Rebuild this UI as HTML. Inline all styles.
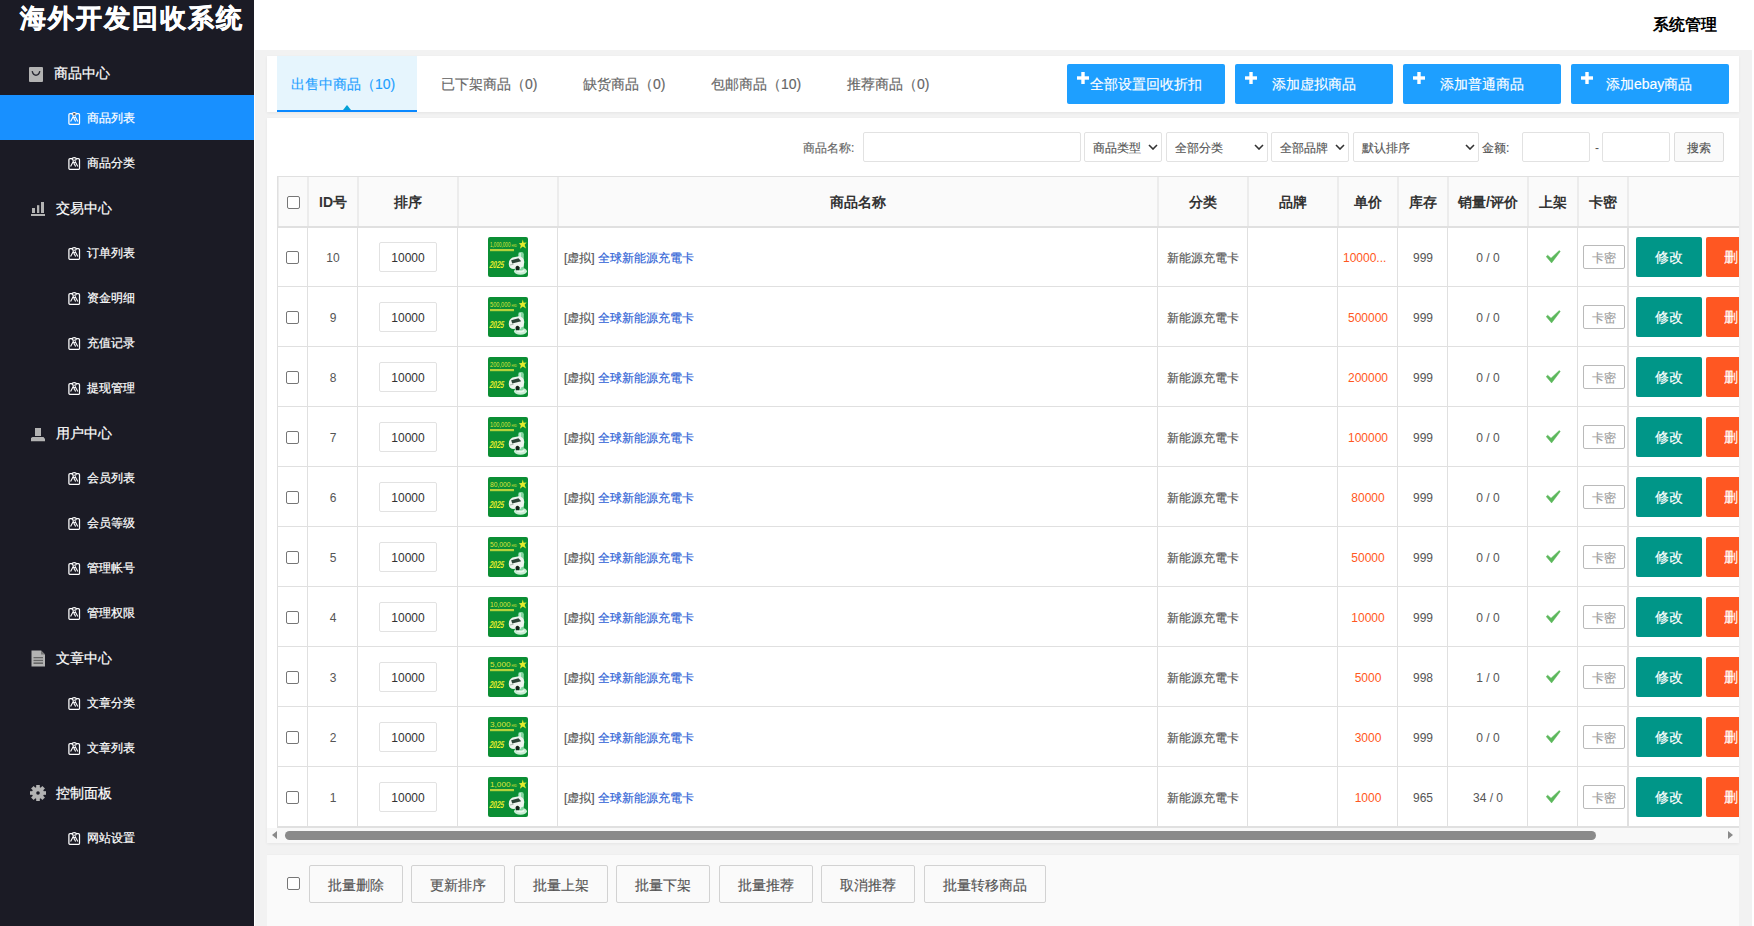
<!DOCTYPE html><html><head><meta charset="utf-8"><style>
*{margin:0;padding:0;box-sizing:border-box}
html,body{width:1754px;height:926px;overflow:hidden;background:#fff}
body{position:relative;font-family:"Liberation Sans", sans-serif;font-size:12px;color:#666}
.a{position:absolute}
.t{position:absolute;white-space:nowrap;line-height:1}
.k{-webkit-text-stroke:0.15px currentColor}
#side{left:0;top:0;width:254px;height:926px;background:#1b1b25}
.mt{color:#fff;font-size:14px;-webkit-text-stroke:0.2px #fff}
.st{color:#fff;font-size:12px;-webkit-text-stroke:0.2px #fff}
.panel{background:#fff;box-shadow:0 1px 3px rgba(0,0,0,.06)}
.btnb{background:#1e9fff;border-radius:2px;height:40px;width:158px}
.btnb .tx{color:#fff;font-size:14px}
.inp{border:1px solid #e2e2e2;border-radius:2px;background:#fff}
.sel{border:1px solid #e2e2e2;border-radius:2px;background:#fff}
.hl{background:#e0e0e0}
.hd{font-weight:bold;color:#333;font-size:14px;-webkit-text-stroke:0}
.cb{width:13px;height:13px;border:1px solid #767676;border-radius:2px;background:#fff}
.bb{border:1px solid #d2d2d2;border-radius:2px;height:38px;width:94px;background:#fafafa}
.bb .tx{color:#555;font-size:14px}
</style></head><body>
<div id="side" class="a"></div>
<div class="a" style="left:0;top:95px;width:254px;height:45px;background:#1890ff"></div>
<div class="t" style="left:20px;top:5px;font-size:26px;font-weight:bold;letter-spacing:2px;-webkit-text-stroke:0.5px #fff;color:#fff">海外开发回收系统</div>
<div class="t mt" style="left:54px;top:66.0px">商品中心</div>
<svg class="a" style="left:29px;top:66.5px" width="14" height="15" viewBox="0 0 14 15"><rect x="0" y="0" width="14" height="15" rx="1" fill="#b3b3b3"/><path d="M3.2 4.2 Q4 8.2 7 8.2 Q10 8.2 10.8 4.2" stroke="#2a2a33" stroke-width="1.4" fill="none"/></svg>
<svg class="a" style="left:67.5px;top:111.5px" width="13" height="13" viewBox="0 0 13 13"><rect x="0.9" y="1.6" width="10.6" height="10.8" rx="1.2" stroke="#fff" stroke-width="1.25" fill="none"/><ellipse cx="6.2" cy="1.9" rx="2.1" ry="1.3" stroke="#fff" stroke-width="1.1" fill="#1b1b25"/><path d="M2.6 9.6 L5.2 4.4 L7.6 9.6 M5.6 7.2 L7.3 4.8 L9.8 9.4" stroke="#fff" stroke-width="1.1" fill="none"/></svg>
<div class="t st" style="left:87px;top:111.5px">商品列表</div>
<svg class="a" style="left:67.5px;top:156.5px" width="13" height="13" viewBox="0 0 13 13"><rect x="0.9" y="1.6" width="10.6" height="10.8" rx="1.2" stroke="#fff" stroke-width="1.25" fill="none"/><ellipse cx="6.2" cy="1.9" rx="2.1" ry="1.3" stroke="#fff" stroke-width="1.1" fill="#1b1b25"/><path d="M2.6 9.6 L5.2 4.4 L7.6 9.6 M5.6 7.2 L7.3 4.8 L9.8 9.4" stroke="#fff" stroke-width="1.1" fill="none"/></svg>
<div class="t st" style="left:87px;top:156.5px">商品分类</div>
<div class="t mt" style="left:56px;top:201.0px">交易中心</div>
<svg class="a" style="left:31px;top:202.0px" width="14" height="15" viewBox="0 0 14 15"><rect x="1" y="6" width="3" height="5" fill="#b3b3b3"/><rect x="6" y="3.2" width="2.3" height="7.8" fill="#b3b3b3"/><rect x="10" y="0" width="3" height="11" fill="#b3b3b3"/><rect x="0" y="12" width="14" height="2" fill="#b3b3b3"/></svg>
<svg class="a" style="left:67.5px;top:246.5px" width="13" height="13" viewBox="0 0 13 13"><rect x="0.9" y="1.6" width="10.6" height="10.8" rx="1.2" stroke="#fff" stroke-width="1.25" fill="none"/><ellipse cx="6.2" cy="1.9" rx="2.1" ry="1.3" stroke="#fff" stroke-width="1.1" fill="#1b1b25"/><path d="M2.6 9.6 L5.2 4.4 L7.6 9.6 M5.6 7.2 L7.3 4.8 L9.8 9.4" stroke="#fff" stroke-width="1.1" fill="none"/></svg>
<div class="t st" style="left:87px;top:246.5px">订单列表</div>
<svg class="a" style="left:67.5px;top:291.5px" width="13" height="13" viewBox="0 0 13 13"><rect x="0.9" y="1.6" width="10.6" height="10.8" rx="1.2" stroke="#fff" stroke-width="1.25" fill="none"/><ellipse cx="6.2" cy="1.9" rx="2.1" ry="1.3" stroke="#fff" stroke-width="1.1" fill="#1b1b25"/><path d="M2.6 9.6 L5.2 4.4 L7.6 9.6 M5.6 7.2 L7.3 4.8 L9.8 9.4" stroke="#fff" stroke-width="1.1" fill="none"/></svg>
<div class="t st" style="left:87px;top:291.5px">资金明细</div>
<svg class="a" style="left:67.5px;top:336.5px" width="13" height="13" viewBox="0 0 13 13"><rect x="0.9" y="1.6" width="10.6" height="10.8" rx="1.2" stroke="#fff" stroke-width="1.25" fill="none"/><ellipse cx="6.2" cy="1.9" rx="2.1" ry="1.3" stroke="#fff" stroke-width="1.1" fill="#1b1b25"/><path d="M2.6 9.6 L5.2 4.4 L7.6 9.6 M5.6 7.2 L7.3 4.8 L9.8 9.4" stroke="#fff" stroke-width="1.1" fill="none"/></svg>
<div class="t st" style="left:87px;top:336.5px">充值记录</div>
<svg class="a" style="left:67.5px;top:381.5px" width="13" height="13" viewBox="0 0 13 13"><rect x="0.9" y="1.6" width="10.6" height="10.8" rx="1.2" stroke="#fff" stroke-width="1.25" fill="none"/><ellipse cx="6.2" cy="1.9" rx="2.1" ry="1.3" stroke="#fff" stroke-width="1.1" fill="#1b1b25"/><path d="M2.6 9.6 L5.2 4.4 L7.6 9.6 M5.6 7.2 L7.3 4.8 L9.8 9.4" stroke="#fff" stroke-width="1.1" fill="none"/></svg>
<div class="t st" style="left:87px;top:381.5px">提现管理</div>
<div class="t mt" style="left:56px;top:426.0px">用户中心</div>
<svg class="a" style="left:31px;top:428.0px" width="14" height="14" viewBox="0 0 14 14"><rect x="4" y="0" width="6" height="8" fill="#b3b3b3"/><path d="M0 10 L1.5 9 L12.5 9 L14 11 L14 13.3 L0 13.3 Z" fill="#b3b3b3"/></svg>
<svg class="a" style="left:67.5px;top:471.5px" width="13" height="13" viewBox="0 0 13 13"><rect x="0.9" y="1.6" width="10.6" height="10.8" rx="1.2" stroke="#fff" stroke-width="1.25" fill="none"/><ellipse cx="6.2" cy="1.9" rx="2.1" ry="1.3" stroke="#fff" stroke-width="1.1" fill="#1b1b25"/><path d="M2.6 9.6 L5.2 4.4 L7.6 9.6 M5.6 7.2 L7.3 4.8 L9.8 9.4" stroke="#fff" stroke-width="1.1" fill="none"/></svg>
<div class="t st" style="left:87px;top:471.5px">会员列表</div>
<svg class="a" style="left:67.5px;top:516.5px" width="13" height="13" viewBox="0 0 13 13"><rect x="0.9" y="1.6" width="10.6" height="10.8" rx="1.2" stroke="#fff" stroke-width="1.25" fill="none"/><ellipse cx="6.2" cy="1.9" rx="2.1" ry="1.3" stroke="#fff" stroke-width="1.1" fill="#1b1b25"/><path d="M2.6 9.6 L5.2 4.4 L7.6 9.6 M5.6 7.2 L7.3 4.8 L9.8 9.4" stroke="#fff" stroke-width="1.1" fill="none"/></svg>
<div class="t st" style="left:87px;top:516.5px">会员等级</div>
<svg class="a" style="left:67.5px;top:561.5px" width="13" height="13" viewBox="0 0 13 13"><rect x="0.9" y="1.6" width="10.6" height="10.8" rx="1.2" stroke="#fff" stroke-width="1.25" fill="none"/><ellipse cx="6.2" cy="1.9" rx="2.1" ry="1.3" stroke="#fff" stroke-width="1.1" fill="#1b1b25"/><path d="M2.6 9.6 L5.2 4.4 L7.6 9.6 M5.6 7.2 L7.3 4.8 L9.8 9.4" stroke="#fff" stroke-width="1.1" fill="none"/></svg>
<div class="t st" style="left:87px;top:561.5px">管理帐号</div>
<svg class="a" style="left:67.5px;top:606.5px" width="13" height="13" viewBox="0 0 13 13"><rect x="0.9" y="1.6" width="10.6" height="10.8" rx="1.2" stroke="#fff" stroke-width="1.25" fill="none"/><ellipse cx="6.2" cy="1.9" rx="2.1" ry="1.3" stroke="#fff" stroke-width="1.1" fill="#1b1b25"/><path d="M2.6 9.6 L5.2 4.4 L7.6 9.6 M5.6 7.2 L7.3 4.8 L9.8 9.4" stroke="#fff" stroke-width="1.1" fill="none"/></svg>
<div class="t st" style="left:87px;top:606.5px">管理权限</div>
<div class="t mt" style="left:56px;top:651.0px">文章中心</div>
<svg class="a" style="left:31px;top:649.5px" width="15" height="17" viewBox="0 0 15 17"><path d="M0.5 0.5 L10 0.5 L14 4.5 L14 16.5 L0.5 16.5 Z" fill="#b3b3b3"/><path d="M10 0.5 L10 4.5 L14 4.5" fill="#777"/><rect x="2.5" y="7" width="9.5" height="1.3" fill="#666"/><rect x="2.5" y="9.8" width="9.5" height="1.3" fill="#666"/><rect x="2.5" y="12.5" width="9.5" height="1.3" fill="#555"/></svg>
<svg class="a" style="left:67.5px;top:696.5px" width="13" height="13" viewBox="0 0 13 13"><rect x="0.9" y="1.6" width="10.6" height="10.8" rx="1.2" stroke="#fff" stroke-width="1.25" fill="none"/><ellipse cx="6.2" cy="1.9" rx="2.1" ry="1.3" stroke="#fff" stroke-width="1.1" fill="#1b1b25"/><path d="M2.6 9.6 L5.2 4.4 L7.6 9.6 M5.6 7.2 L7.3 4.8 L9.8 9.4" stroke="#fff" stroke-width="1.1" fill="none"/></svg>
<div class="t st" style="left:87px;top:696.5px">文章分类</div>
<svg class="a" style="left:67.5px;top:741.5px" width="13" height="13" viewBox="0 0 13 13"><rect x="0.9" y="1.6" width="10.6" height="10.8" rx="1.2" stroke="#fff" stroke-width="1.25" fill="none"/><ellipse cx="6.2" cy="1.9" rx="2.1" ry="1.3" stroke="#fff" stroke-width="1.1" fill="#1b1b25"/><path d="M2.6 9.6 L5.2 4.4 L7.6 9.6 M5.6 7.2 L7.3 4.8 L9.8 9.4" stroke="#fff" stroke-width="1.1" fill="none"/></svg>
<div class="t st" style="left:87px;top:741.5px">文章列表</div>
<div class="t mt" style="left:56px;top:786.0px">控制面板</div>
<svg class="a" style="left:30px;top:784.5px" width="16" height="16" viewBox="0 0 16 16"><g fill="#b3b3b3"><circle cx="8" cy="8" r="6"/><rect x="6.2" y="0" width="3.6" height="16"/><rect x="0" y="6.2" width="16" height="3.6"/><rect x="6.2" y="0" width="3.6" height="16" transform="rotate(45 8 8)"/><rect x="6.2" y="0" width="3.6" height="16" transform="rotate(-45 8 8)"/></g><circle cx="8" cy="8" r="1.8" fill="#1b1b25"/></svg>
<svg class="a" style="left:67.5px;top:831.5px" width="13" height="13" viewBox="0 0 13 13"><rect x="0.9" y="1.6" width="10.6" height="10.8" rx="1.2" stroke="#fff" stroke-width="1.25" fill="none"/><ellipse cx="6.2" cy="1.9" rx="2.1" ry="1.3" stroke="#fff" stroke-width="1.1" fill="#1b1b25"/><path d="M2.6 9.6 L5.2 4.4 L7.6 9.6 M5.6 7.2 L7.3 4.8 L9.8 9.4" stroke="#fff" stroke-width="1.1" fill="none"/></svg>
<div class="t st" style="left:87px;top:831.5px">网站设置</div>
<div class="a" style="left:255px;top:50px;width:1497px;height:876px;background:#f2f2f2"></div>
<div class="t" style="left:1653px;top:17px;font-size:16px;font-weight:bold;color:#000;-webkit-text-stroke:0">系统管理</div>
<div class="a panel" style="left:267px;top:56px;width:1472px;height:56px"></div>
<div class="a" style="left:277px;top:56px;width:140px;height:54px;background:#e6f5fd"></div>
<div class="a" style="left:277px;top:110px;width:140px;height:2px;background:#0a88ff"></div>
<div class="a" style="left:343px;top:105px;width:0;height:0;border-left:4.5px solid transparent;border-right:4.5px solid transparent;border-bottom:5px solid #03a0d6"></div>
<div class="t k" style="left:291px;top:77px;font-size:14px;color:#1e9fff">出售中商品（10)</div>
<div class="t k" style="left:441px;top:77px;font-size:14px;color:#666">已下架商品（0)</div>
<div class="t k" style="left:583px;top:77px;font-size:14px;color:#666">缺货商品（0)</div>
<div class="t k" style="left:711px;top:77px;font-size:14px;color:#666">包邮商品（10)</div>
<div class="t k" style="left:847px;top:77px;font-size:14px;color:#666">推荐商品（0)</div>
<div class="a btnb" style="left:1067px;top:64px"></div>
<svg class="a" style="left:1077px;top:72px" width="12" height="12" viewBox="0 0 12 12"><rect x="4.3" y="0" width="3.4" height="12" fill="#fff"/><rect x="0" y="4.3" width="12" height="3.4" fill="#fff"/></svg>
<div class="t k" style="left:1090px;top:77px;font-size:14px;color:#fff">全部设置回收折扣</div>
<div class="a btnb" style="left:1235px;top:64px"></div>
<svg class="a" style="left:1245px;top:72px" width="12" height="12" viewBox="0 0 12 12"><rect x="4.3" y="0" width="3.4" height="12" fill="#fff"/><rect x="0" y="4.3" width="12" height="3.4" fill="#fff"/></svg>
<div class="t k" style="left:1272px;top:77px;font-size:14px;color:#fff">添加虚拟商品</div>
<div class="a btnb" style="left:1403px;top:64px"></div>
<svg class="a" style="left:1413px;top:72px" width="12" height="12" viewBox="0 0 12 12"><rect x="4.3" y="0" width="3.4" height="12" fill="#fff"/><rect x="0" y="4.3" width="12" height="3.4" fill="#fff"/></svg>
<div class="t k" style="left:1440px;top:77px;font-size:14px;color:#fff">添加普通商品</div>
<div class="a btnb" style="left:1571px;top:64px"></div>
<svg class="a" style="left:1581px;top:72px" width="12" height="12" viewBox="0 0 12 12"><rect x="4.3" y="0" width="3.4" height="12" fill="#fff"/><rect x="0" y="4.3" width="12" height="3.4" fill="#fff"/></svg>
<div class="t k" style="left:1606px;top:77px;font-size:14px;color:#fff">添加ebay商品</div>
<div class="a panel" style="left:267px;top:118px;width:1472px;height:725px"></div>
<div class="t k" style="left:803px;top:142px;font-size:12px;color:#666">商品名称:</div>
<div class="a inp" style="left:863px;top:132px;width:218px;height:30px"></div>
<div class="a sel" style="left:1084px;top:132px;width:78px;height:30px"></div>
<div class="t k" style="left:1093px;top:142px;font-size:12px;color:#555">商品类型</div>
<svg class="a" style="left:1148px;top:144px" width="10" height="6" viewBox="0 0 10 6"><path d="M1 1 L5 5 L9 1" stroke="#333" stroke-width="1.6" fill="none"/></svg>
<div class="a sel" style="left:1166px;top:132px;width:102px;height:30px"></div>
<div class="t k" style="left:1175px;top:142px;font-size:12px;color:#555">全部分类</div>
<svg class="a" style="left:1254px;top:144px" width="10" height="6" viewBox="0 0 10 6"><path d="M1 1 L5 5 L9 1" stroke="#333" stroke-width="1.6" fill="none"/></svg>
<div class="a sel" style="left:1271px;top:132px;width:78px;height:30px"></div>
<div class="t k" style="left:1280px;top:142px;font-size:12px;color:#555">全部品牌</div>
<svg class="a" style="left:1335px;top:144px" width="10" height="6" viewBox="0 0 10 6"><path d="M1 1 L5 5 L9 1" stroke="#333" stroke-width="1.6" fill="none"/></svg>
<div class="a sel" style="left:1353px;top:132px;width:126px;height:30px"></div>
<div class="t k" style="left:1362px;top:142px;font-size:12px;color:#555">默认排序</div>
<svg class="a" style="left:1465px;top:144px" width="10" height="6" viewBox="0 0 10 6"><path d="M1 1 L5 5 L9 1" stroke="#333" stroke-width="1.6" fill="none"/></svg>
<div class="t k" style="left:1482px;top:142px;font-size:12px;color:#555">金额:</div>
<div class="a inp" style="left:1522px;top:132px;width:68px;height:30px"></div>
<div class="t" style="left:1595px;top:142px;font-size:12px;color:#555">-</div>
<div class="a inp" style="left:1602px;top:132px;width:68px;height:30px"></div>
<div class="a" style="left:1674px;top:132px;width:50px;height:30px;border:1px solid #ddd;border-radius:2px;background:#fafafa"></div>
<div class="t k" style="left:1687px;top:142px;font-size:12px;color:#555">搜索</div>
<div class="a" style="left:277px;top:176px;width:1462px;height:51px;background:#fafafa"></div>
<div class="a hl" style="left:277px;top:176px;width:1462px;height:1px"></div>
<div class="a hl" style="left:277px;top:226px;width:1462px;height:1px"></div>
<div class="a hl" style="left:277px;top:227px;width:1462px;height:1px"></div>
<div class="a hl" style="left:277px;top:286px;width:1462px;height:1px"></div>
<div class="a hl" style="left:277px;top:346px;width:1462px;height:1px"></div>
<div class="a hl" style="left:277px;top:406px;width:1462px;height:1px"></div>
<div class="a hl" style="left:277px;top:466px;width:1462px;height:1px"></div>
<div class="a hl" style="left:277px;top:526px;width:1462px;height:1px"></div>
<div class="a hl" style="left:277px;top:586px;width:1462px;height:1px"></div>
<div class="a hl" style="left:277px;top:646px;width:1462px;height:1px"></div>
<div class="a hl" style="left:277px;top:706px;width:1462px;height:1px"></div>
<div class="a hl" style="left:277px;top:766px;width:1462px;height:1px"></div>
<div class="a hl" style="left:277px;top:826px;width:1462px;height:1px"></div>
<div class="a hl" style="left:277px;top:827px;width:1462px;height:1px"></div>
<div class="a hl" style="left:277px;top:226px;width:1px;height:602px"></div>
<div class="a" style="left:277px;top:176px;width:2px;height:50px;background:#ececec"></div>
<div class="a hl" style="left:307px;top:226px;width:1px;height:602px"></div>
<div class="a" style="left:307px;top:176px;width:2px;height:50px;background:#ececec"></div>
<div class="a hl" style="left:357px;top:226px;width:1px;height:602px"></div>
<div class="a" style="left:357px;top:176px;width:2px;height:50px;background:#ececec"></div>
<div class="a hl" style="left:457px;top:226px;width:1px;height:602px"></div>
<div class="a" style="left:457px;top:176px;width:2px;height:50px;background:#ececec"></div>
<div class="a hl" style="left:557px;top:226px;width:1px;height:602px"></div>
<div class="a" style="left:557px;top:176px;width:2px;height:50px;background:#ececec"></div>
<div class="a hl" style="left:1157px;top:226px;width:1px;height:602px"></div>
<div class="a" style="left:1157px;top:176px;width:2px;height:50px;background:#ececec"></div>
<div class="a hl" style="left:1247px;top:226px;width:1px;height:602px"></div>
<div class="a" style="left:1247px;top:176px;width:2px;height:50px;background:#ececec"></div>
<div class="a hl" style="left:1337px;top:226px;width:1px;height:602px"></div>
<div class="a" style="left:1337px;top:176px;width:2px;height:50px;background:#ececec"></div>
<div class="a hl" style="left:1397px;top:226px;width:1px;height:602px"></div>
<div class="a" style="left:1397px;top:176px;width:2px;height:50px;background:#ececec"></div>
<div class="a hl" style="left:1447px;top:226px;width:1px;height:602px"></div>
<div class="a" style="left:1447px;top:176px;width:2px;height:50px;background:#ececec"></div>
<div class="a hl" style="left:1527px;top:226px;width:1px;height:602px"></div>
<div class="a" style="left:1527px;top:176px;width:2px;height:50px;background:#ececec"></div>
<div class="a hl" style="left:1577px;top:226px;width:1px;height:602px"></div>
<div class="a" style="left:1577px;top:176px;width:2px;height:50px;background:#ececec"></div>
<div class="a hl" style="left:1627px;top:226px;width:1px;height:602px"></div>
<div class="a" style="left:1627px;top:176px;width:2px;height:50px;background:#ececec"></div>
<div class="a hl" style="left:1628px;top:226px;width:1px;height:602px"></div>
<div class="a hl" style="left:277px;top:176px;width:1px;height:652px"></div>
<div class="a hl" style="left:277px;top:176px;width:1462px;height:1px"></div>
<div class="a cb" style="left:287px;top:196px"></div>
<div class="t hd" style="left:333px;top:195px;transform:translateX(-50%)">ID号</div>
<div class="t hd" style="left:408px;top:195px;transform:translateX(-50%)">排序</div>
<div class="t hd" style="left:858px;top:195px;transform:translateX(-50%)">商品名称</div>
<div class="t hd" style="left:1203px;top:195px;transform:translateX(-50%)">分类</div>
<div class="t hd" style="left:1293px;top:195px;transform:translateX(-50%)">品牌</div>
<div class="t hd" style="left:1368px;top:195px;transform:translateX(-50%)">单价</div>
<div class="t hd" style="left:1423px;top:195px;transform:translateX(-50%)">库存</div>
<div class="t hd" style="left:1488px;top:195px;transform:translateX(-50%)">销量/评价</div>
<div class="t hd" style="left:1553px;top:195px;transform:translateX(-50%)">上架</div>
<div class="t hd" style="left:1603px;top:195px;transform:translateX(-50%)">卡密</div>
<div class="a cb" style="left:286px;top:251px"></div>
<div class="t" style="left:333px;top:252px;font-size:12px;color:#555;transform:translateX(-50%)">10</div>
<div class="a inp" style="left:379px;top:242px;width:58px;height:30px"></div>
<div class="t" style="left:408px;top:252px;font-size:12px;color:#333;transform:translateX(-50%)">10000</div>
<svg class="a" style="left:488px;top:237px" width="40" height="40" viewBox="0 0 40 40"><rect width="40" height="40" rx="2" fill="#0b8e34"/><text x="2" y="10.3" font-size="7.6" font-family="Liberation Sans" fill="#dfe63a" textLength="20.5" lengthAdjust="spacingAndGlyphs">1,000,000</text><text x="23.5" y="9.6" font-size="3.6" font-family="Liberation Sans" fill="#dfe63a" textLength="5.5" lengthAdjust="spacingAndGlyphs">HKD</text><rect x="2" y="12" width="24" height="2.2" fill="#c6d93c" opacity=".9"/><text x="2" y="30.8" font-size="10" font-weight="bold" font-family="Liberation Sans" fill="#e9ee2c" textLength="14.5" lengthAdjust="spacingAndGlyphs" transform="skewX(-12) translate(5.5 0)">2025</text><path d="M34.8 2.5 L35.6 5.8 L38.6 5.4 L36.6 7.8 L38 11.4 L34.8 9.6 L32 11.8 L32.8 8.2 L30.8 6.2 L33.8 6 Z" fill="#e6ec2c"/><ellipse cx="32.5" cy="34.3" rx="6.5" ry="3.5" fill="#c9ecd3"/><ellipse cx="32.5" cy="33.8" rx="3.8" ry="1.7" fill="#eaf8ee"/><rect x="30.2" y="15" width="5.6" height="18.5" rx="2.2" fill="#86d7a2"/><rect x="31.2" y="16" width="1.8" height="16" fill="#c8f0d4"/><path d="M20.8 27.5 Q20.5 22.5 24.5 20.6 L31 19.2 Q35.8 20 36.3 25 L35.5 29.5 Q30.5 32 25 32 Q21 31.2 20.8 27.5 Z" fill="#eef4ef"/><path d="M23.2 23.2 L30.5 21.2 L33.2 24.2 L24.2 26.4 Z" fill="#2b4436"/><path d="M27.5 30.2 Q29.6 27.4 31.8 30.4 L31.2 33.2 L28 33.2 Z" fill="#13241a"/><path d="M21.8 28 L25.5 27.3" stroke="#9aa8a0" stroke-width=".8"/></svg>
<div class="t k" style="left:564px;top:252px;font-size:12px;color:#555">[虚拟] <span style="color:#2d5fd6">全球新能源充電卡</span></div>
<div class="t k" style="left:1203px;top:252px;font-size:12px;color:#555;transform:translateX(-50%)">新能源充電卡</div>
<div class="t" style="left:1343px;top:252px;font-size:12px;color:#ff5722">10000...</div>
<div class="t" style="left:1423px;top:252px;font-size:12px;color:#555;transform:translateX(-50%)">999</div>
<div class="t" style="left:1488px;top:252px;font-size:12px;color:#555;transform:translateX(-50%)">0 / 0</div>
<svg class="a" style="left:1546px;top:250px" width="15" height="14" viewBox="0 0 15 14"><path d="M0.2 6.6 L1.7 5.2 L5.0 8.2 L13.3 0.5 L14.2 1.6 L5.6 12.9 Z" fill="#5cb85c" stroke="#5cb85c" stroke-width="0.5" stroke-linejoin="round"/></svg>
<div class="a" style="left:1583px;top:245px;width:42px;height:24px;border:1px solid #bababa;border-radius:2px;background:#fff"></div>
<div class="t k" style="left:1592px;top:252px;font-size:12px;color:#999">卡密</div>
<div class="a" style="left:1636px;top:237px;width:66px;height:40px;background:#009688;border-radius:2px"></div>
<div class="t k" style="left:1655px;top:250px;font-size:14px;color:#fff">修改</div>
<div class="a" style="left:1706px;top:237px;width:33px;height:40px;background:#ff5722;border-radius:2px 0 0 2px"></div>
<div class="t k" style="left:1724px;top:250px;width:15px;overflow:hidden;font-size:14px;color:#fff">删</div>
<div class="a cb" style="left:286px;top:311px"></div>
<div class="t" style="left:333px;top:312px;font-size:12px;color:#555;transform:translateX(-50%)">9</div>
<div class="a inp" style="left:379px;top:302px;width:58px;height:30px"></div>
<div class="t" style="left:408px;top:312px;font-size:12px;color:#333;transform:translateX(-50%)">10000</div>
<svg class="a" style="left:488px;top:297px" width="40" height="40" viewBox="0 0 40 40"><rect width="40" height="40" rx="2" fill="#0b8e34"/><text x="2" y="10.3" font-size="7.6" font-family="Liberation Sans" fill="#dfe63a" textLength="20.5" lengthAdjust="spacingAndGlyphs">500,000</text><text x="23.5" y="9.6" font-size="3.6" font-family="Liberation Sans" fill="#dfe63a" textLength="5.5" lengthAdjust="spacingAndGlyphs">HKD</text><rect x="2" y="12" width="24" height="2.2" fill="#c6d93c" opacity=".9"/><text x="2" y="30.8" font-size="10" font-weight="bold" font-family="Liberation Sans" fill="#e9ee2c" textLength="14.5" lengthAdjust="spacingAndGlyphs" transform="skewX(-12) translate(5.5 0)">2025</text><path d="M34.8 2.5 L35.6 5.8 L38.6 5.4 L36.6 7.8 L38 11.4 L34.8 9.6 L32 11.8 L32.8 8.2 L30.8 6.2 L33.8 6 Z" fill="#e6ec2c"/><ellipse cx="32.5" cy="34.3" rx="6.5" ry="3.5" fill="#c9ecd3"/><ellipse cx="32.5" cy="33.8" rx="3.8" ry="1.7" fill="#eaf8ee"/><rect x="30.2" y="15" width="5.6" height="18.5" rx="2.2" fill="#86d7a2"/><rect x="31.2" y="16" width="1.8" height="16" fill="#c8f0d4"/><path d="M20.8 27.5 Q20.5 22.5 24.5 20.6 L31 19.2 Q35.8 20 36.3 25 L35.5 29.5 Q30.5 32 25 32 Q21 31.2 20.8 27.5 Z" fill="#eef4ef"/><path d="M23.2 23.2 L30.5 21.2 L33.2 24.2 L24.2 26.4 Z" fill="#2b4436"/><path d="M27.5 30.2 Q29.6 27.4 31.8 30.4 L31.2 33.2 L28 33.2 Z" fill="#13241a"/><path d="M21.8 28 L25.5 27.3" stroke="#9aa8a0" stroke-width=".8"/></svg>
<div class="t k" style="left:564px;top:312px;font-size:12px;color:#555">[虚拟] <span style="color:#2d5fd6">全球新能源充電卡</span></div>
<div class="t k" style="left:1203px;top:312px;font-size:12px;color:#555;transform:translateX(-50%)">新能源充電卡</div>
<div class="t" style="left:1368px;top:312px;font-size:12px;color:#ff5722;transform:translateX(-50%)">500000</div>
<div class="t" style="left:1423px;top:312px;font-size:12px;color:#555;transform:translateX(-50%)">999</div>
<div class="t" style="left:1488px;top:312px;font-size:12px;color:#555;transform:translateX(-50%)">0 / 0</div>
<svg class="a" style="left:1546px;top:310px" width="15" height="14" viewBox="0 0 15 14"><path d="M0.2 6.6 L1.7 5.2 L5.0 8.2 L13.3 0.5 L14.2 1.6 L5.6 12.9 Z" fill="#5cb85c" stroke="#5cb85c" stroke-width="0.5" stroke-linejoin="round"/></svg>
<div class="a" style="left:1583px;top:305px;width:42px;height:24px;border:1px solid #bababa;border-radius:2px;background:#fff"></div>
<div class="t k" style="left:1592px;top:312px;font-size:12px;color:#999">卡密</div>
<div class="a" style="left:1636px;top:297px;width:66px;height:40px;background:#009688;border-radius:2px"></div>
<div class="t k" style="left:1655px;top:310px;font-size:14px;color:#fff">修改</div>
<div class="a" style="left:1706px;top:297px;width:33px;height:40px;background:#ff5722;border-radius:2px 0 0 2px"></div>
<div class="t k" style="left:1724px;top:310px;width:15px;overflow:hidden;font-size:14px;color:#fff">删</div>
<div class="a cb" style="left:286px;top:371px"></div>
<div class="t" style="left:333px;top:372px;font-size:12px;color:#555;transform:translateX(-50%)">8</div>
<div class="a inp" style="left:379px;top:362px;width:58px;height:30px"></div>
<div class="t" style="left:408px;top:372px;font-size:12px;color:#333;transform:translateX(-50%)">10000</div>
<svg class="a" style="left:488px;top:357px" width="40" height="40" viewBox="0 0 40 40"><rect width="40" height="40" rx="2" fill="#0b8e34"/><text x="2" y="10.3" font-size="7.6" font-family="Liberation Sans" fill="#dfe63a" textLength="20.5" lengthAdjust="spacingAndGlyphs">200,000</text><text x="23.5" y="9.6" font-size="3.6" font-family="Liberation Sans" fill="#dfe63a" textLength="5.5" lengthAdjust="spacingAndGlyphs">HKD</text><rect x="2" y="12" width="24" height="2.2" fill="#c6d93c" opacity=".9"/><text x="2" y="30.8" font-size="10" font-weight="bold" font-family="Liberation Sans" fill="#e9ee2c" textLength="14.5" lengthAdjust="spacingAndGlyphs" transform="skewX(-12) translate(5.5 0)">2025</text><path d="M34.8 2.5 L35.6 5.8 L38.6 5.4 L36.6 7.8 L38 11.4 L34.8 9.6 L32 11.8 L32.8 8.2 L30.8 6.2 L33.8 6 Z" fill="#e6ec2c"/><ellipse cx="32.5" cy="34.3" rx="6.5" ry="3.5" fill="#c9ecd3"/><ellipse cx="32.5" cy="33.8" rx="3.8" ry="1.7" fill="#eaf8ee"/><rect x="30.2" y="15" width="5.6" height="18.5" rx="2.2" fill="#86d7a2"/><rect x="31.2" y="16" width="1.8" height="16" fill="#c8f0d4"/><path d="M20.8 27.5 Q20.5 22.5 24.5 20.6 L31 19.2 Q35.8 20 36.3 25 L35.5 29.5 Q30.5 32 25 32 Q21 31.2 20.8 27.5 Z" fill="#eef4ef"/><path d="M23.2 23.2 L30.5 21.2 L33.2 24.2 L24.2 26.4 Z" fill="#2b4436"/><path d="M27.5 30.2 Q29.6 27.4 31.8 30.4 L31.2 33.2 L28 33.2 Z" fill="#13241a"/><path d="M21.8 28 L25.5 27.3" stroke="#9aa8a0" stroke-width=".8"/></svg>
<div class="t k" style="left:564px;top:372px;font-size:12px;color:#555">[虚拟] <span style="color:#2d5fd6">全球新能源充電卡</span></div>
<div class="t k" style="left:1203px;top:372px;font-size:12px;color:#555;transform:translateX(-50%)">新能源充電卡</div>
<div class="t" style="left:1368px;top:372px;font-size:12px;color:#ff5722;transform:translateX(-50%)">200000</div>
<div class="t" style="left:1423px;top:372px;font-size:12px;color:#555;transform:translateX(-50%)">999</div>
<div class="t" style="left:1488px;top:372px;font-size:12px;color:#555;transform:translateX(-50%)">0 / 0</div>
<svg class="a" style="left:1546px;top:370px" width="15" height="14" viewBox="0 0 15 14"><path d="M0.2 6.6 L1.7 5.2 L5.0 8.2 L13.3 0.5 L14.2 1.6 L5.6 12.9 Z" fill="#5cb85c" stroke="#5cb85c" stroke-width="0.5" stroke-linejoin="round"/></svg>
<div class="a" style="left:1583px;top:365px;width:42px;height:24px;border:1px solid #bababa;border-radius:2px;background:#fff"></div>
<div class="t k" style="left:1592px;top:372px;font-size:12px;color:#999">卡密</div>
<div class="a" style="left:1636px;top:357px;width:66px;height:40px;background:#009688;border-radius:2px"></div>
<div class="t k" style="left:1655px;top:370px;font-size:14px;color:#fff">修改</div>
<div class="a" style="left:1706px;top:357px;width:33px;height:40px;background:#ff5722;border-radius:2px 0 0 2px"></div>
<div class="t k" style="left:1724px;top:370px;width:15px;overflow:hidden;font-size:14px;color:#fff">删</div>
<div class="a cb" style="left:286px;top:431px"></div>
<div class="t" style="left:333px;top:432px;font-size:12px;color:#555;transform:translateX(-50%)">7</div>
<div class="a inp" style="left:379px;top:422px;width:58px;height:30px"></div>
<div class="t" style="left:408px;top:432px;font-size:12px;color:#333;transform:translateX(-50%)">10000</div>
<svg class="a" style="left:488px;top:417px" width="40" height="40" viewBox="0 0 40 40"><rect width="40" height="40" rx="2" fill="#0b8e34"/><text x="2" y="10.3" font-size="7.6" font-family="Liberation Sans" fill="#dfe63a" textLength="20.5" lengthAdjust="spacingAndGlyphs">100,000</text><text x="23.5" y="9.6" font-size="3.6" font-family="Liberation Sans" fill="#dfe63a" textLength="5.5" lengthAdjust="spacingAndGlyphs">HKD</text><rect x="2" y="12" width="24" height="2.2" fill="#c6d93c" opacity=".9"/><text x="2" y="30.8" font-size="10" font-weight="bold" font-family="Liberation Sans" fill="#e9ee2c" textLength="14.5" lengthAdjust="spacingAndGlyphs" transform="skewX(-12) translate(5.5 0)">2025</text><path d="M34.8 2.5 L35.6 5.8 L38.6 5.4 L36.6 7.8 L38 11.4 L34.8 9.6 L32 11.8 L32.8 8.2 L30.8 6.2 L33.8 6 Z" fill="#e6ec2c"/><ellipse cx="32.5" cy="34.3" rx="6.5" ry="3.5" fill="#c9ecd3"/><ellipse cx="32.5" cy="33.8" rx="3.8" ry="1.7" fill="#eaf8ee"/><rect x="30.2" y="15" width="5.6" height="18.5" rx="2.2" fill="#86d7a2"/><rect x="31.2" y="16" width="1.8" height="16" fill="#c8f0d4"/><path d="M20.8 27.5 Q20.5 22.5 24.5 20.6 L31 19.2 Q35.8 20 36.3 25 L35.5 29.5 Q30.5 32 25 32 Q21 31.2 20.8 27.5 Z" fill="#eef4ef"/><path d="M23.2 23.2 L30.5 21.2 L33.2 24.2 L24.2 26.4 Z" fill="#2b4436"/><path d="M27.5 30.2 Q29.6 27.4 31.8 30.4 L31.2 33.2 L28 33.2 Z" fill="#13241a"/><path d="M21.8 28 L25.5 27.3" stroke="#9aa8a0" stroke-width=".8"/></svg>
<div class="t k" style="left:564px;top:432px;font-size:12px;color:#555">[虚拟] <span style="color:#2d5fd6">全球新能源充電卡</span></div>
<div class="t k" style="left:1203px;top:432px;font-size:12px;color:#555;transform:translateX(-50%)">新能源充電卡</div>
<div class="t" style="left:1368px;top:432px;font-size:12px;color:#ff5722;transform:translateX(-50%)">100000</div>
<div class="t" style="left:1423px;top:432px;font-size:12px;color:#555;transform:translateX(-50%)">999</div>
<div class="t" style="left:1488px;top:432px;font-size:12px;color:#555;transform:translateX(-50%)">0 / 0</div>
<svg class="a" style="left:1546px;top:430px" width="15" height="14" viewBox="0 0 15 14"><path d="M0.2 6.6 L1.7 5.2 L5.0 8.2 L13.3 0.5 L14.2 1.6 L5.6 12.9 Z" fill="#5cb85c" stroke="#5cb85c" stroke-width="0.5" stroke-linejoin="round"/></svg>
<div class="a" style="left:1583px;top:425px;width:42px;height:24px;border:1px solid #bababa;border-radius:2px;background:#fff"></div>
<div class="t k" style="left:1592px;top:432px;font-size:12px;color:#999">卡密</div>
<div class="a" style="left:1636px;top:417px;width:66px;height:40px;background:#009688;border-radius:2px"></div>
<div class="t k" style="left:1655px;top:430px;font-size:14px;color:#fff">修改</div>
<div class="a" style="left:1706px;top:417px;width:33px;height:40px;background:#ff5722;border-radius:2px 0 0 2px"></div>
<div class="t k" style="left:1724px;top:430px;width:15px;overflow:hidden;font-size:14px;color:#fff">删</div>
<div class="a cb" style="left:286px;top:491px"></div>
<div class="t" style="left:333px;top:492px;font-size:12px;color:#555;transform:translateX(-50%)">6</div>
<div class="a inp" style="left:379px;top:482px;width:58px;height:30px"></div>
<div class="t" style="left:408px;top:492px;font-size:12px;color:#333;transform:translateX(-50%)">10000</div>
<svg class="a" style="left:488px;top:477px" width="40" height="40" viewBox="0 0 40 40"><rect width="40" height="40" rx="2" fill="#0b8e34"/><text x="2" y="10.3" font-size="7.6" font-family="Liberation Sans" fill="#dfe63a" textLength="20.5" lengthAdjust="spacingAndGlyphs">80,000</text><text x="23.5" y="9.6" font-size="3.6" font-family="Liberation Sans" fill="#dfe63a" textLength="5.5" lengthAdjust="spacingAndGlyphs">HKD</text><rect x="2" y="12" width="24" height="2.2" fill="#c6d93c" opacity=".9"/><text x="2" y="30.8" font-size="10" font-weight="bold" font-family="Liberation Sans" fill="#e9ee2c" textLength="14.5" lengthAdjust="spacingAndGlyphs" transform="skewX(-12) translate(5.5 0)">2025</text><path d="M34.8 2.5 L35.6 5.8 L38.6 5.4 L36.6 7.8 L38 11.4 L34.8 9.6 L32 11.8 L32.8 8.2 L30.8 6.2 L33.8 6 Z" fill="#e6ec2c"/><ellipse cx="32.5" cy="34.3" rx="6.5" ry="3.5" fill="#c9ecd3"/><ellipse cx="32.5" cy="33.8" rx="3.8" ry="1.7" fill="#eaf8ee"/><rect x="30.2" y="15" width="5.6" height="18.5" rx="2.2" fill="#86d7a2"/><rect x="31.2" y="16" width="1.8" height="16" fill="#c8f0d4"/><path d="M20.8 27.5 Q20.5 22.5 24.5 20.6 L31 19.2 Q35.8 20 36.3 25 L35.5 29.5 Q30.5 32 25 32 Q21 31.2 20.8 27.5 Z" fill="#eef4ef"/><path d="M23.2 23.2 L30.5 21.2 L33.2 24.2 L24.2 26.4 Z" fill="#2b4436"/><path d="M27.5 30.2 Q29.6 27.4 31.8 30.4 L31.2 33.2 L28 33.2 Z" fill="#13241a"/><path d="M21.8 28 L25.5 27.3" stroke="#9aa8a0" stroke-width=".8"/></svg>
<div class="t k" style="left:564px;top:492px;font-size:12px;color:#555">[虚拟] <span style="color:#2d5fd6">全球新能源充電卡</span></div>
<div class="t k" style="left:1203px;top:492px;font-size:12px;color:#555;transform:translateX(-50%)">新能源充電卡</div>
<div class="t" style="left:1368px;top:492px;font-size:12px;color:#ff5722;transform:translateX(-50%)">80000</div>
<div class="t" style="left:1423px;top:492px;font-size:12px;color:#555;transform:translateX(-50%)">999</div>
<div class="t" style="left:1488px;top:492px;font-size:12px;color:#555;transform:translateX(-50%)">0 / 0</div>
<svg class="a" style="left:1546px;top:490px" width="15" height="14" viewBox="0 0 15 14"><path d="M0.2 6.6 L1.7 5.2 L5.0 8.2 L13.3 0.5 L14.2 1.6 L5.6 12.9 Z" fill="#5cb85c" stroke="#5cb85c" stroke-width="0.5" stroke-linejoin="round"/></svg>
<div class="a" style="left:1583px;top:485px;width:42px;height:24px;border:1px solid #bababa;border-radius:2px;background:#fff"></div>
<div class="t k" style="left:1592px;top:492px;font-size:12px;color:#999">卡密</div>
<div class="a" style="left:1636px;top:477px;width:66px;height:40px;background:#009688;border-radius:2px"></div>
<div class="t k" style="left:1655px;top:490px;font-size:14px;color:#fff">修改</div>
<div class="a" style="left:1706px;top:477px;width:33px;height:40px;background:#ff5722;border-radius:2px 0 0 2px"></div>
<div class="t k" style="left:1724px;top:490px;width:15px;overflow:hidden;font-size:14px;color:#fff">删</div>
<div class="a cb" style="left:286px;top:551px"></div>
<div class="t" style="left:333px;top:552px;font-size:12px;color:#555;transform:translateX(-50%)">5</div>
<div class="a inp" style="left:379px;top:542px;width:58px;height:30px"></div>
<div class="t" style="left:408px;top:552px;font-size:12px;color:#333;transform:translateX(-50%)">10000</div>
<svg class="a" style="left:488px;top:537px" width="40" height="40" viewBox="0 0 40 40"><rect width="40" height="40" rx="2" fill="#0b8e34"/><text x="2" y="10.3" font-size="7.6" font-family="Liberation Sans" fill="#dfe63a" textLength="20.5" lengthAdjust="spacingAndGlyphs">50,000</text><text x="23.5" y="9.6" font-size="3.6" font-family="Liberation Sans" fill="#dfe63a" textLength="5.5" lengthAdjust="spacingAndGlyphs">HKD</text><rect x="2" y="12" width="24" height="2.2" fill="#c6d93c" opacity=".9"/><text x="2" y="30.8" font-size="10" font-weight="bold" font-family="Liberation Sans" fill="#e9ee2c" textLength="14.5" lengthAdjust="spacingAndGlyphs" transform="skewX(-12) translate(5.5 0)">2025</text><path d="M34.8 2.5 L35.6 5.8 L38.6 5.4 L36.6 7.8 L38 11.4 L34.8 9.6 L32 11.8 L32.8 8.2 L30.8 6.2 L33.8 6 Z" fill="#e6ec2c"/><ellipse cx="32.5" cy="34.3" rx="6.5" ry="3.5" fill="#c9ecd3"/><ellipse cx="32.5" cy="33.8" rx="3.8" ry="1.7" fill="#eaf8ee"/><rect x="30.2" y="15" width="5.6" height="18.5" rx="2.2" fill="#86d7a2"/><rect x="31.2" y="16" width="1.8" height="16" fill="#c8f0d4"/><path d="M20.8 27.5 Q20.5 22.5 24.5 20.6 L31 19.2 Q35.8 20 36.3 25 L35.5 29.5 Q30.5 32 25 32 Q21 31.2 20.8 27.5 Z" fill="#eef4ef"/><path d="M23.2 23.2 L30.5 21.2 L33.2 24.2 L24.2 26.4 Z" fill="#2b4436"/><path d="M27.5 30.2 Q29.6 27.4 31.8 30.4 L31.2 33.2 L28 33.2 Z" fill="#13241a"/><path d="M21.8 28 L25.5 27.3" stroke="#9aa8a0" stroke-width=".8"/></svg>
<div class="t k" style="left:564px;top:552px;font-size:12px;color:#555">[虚拟] <span style="color:#2d5fd6">全球新能源充電卡</span></div>
<div class="t k" style="left:1203px;top:552px;font-size:12px;color:#555;transform:translateX(-50%)">新能源充電卡</div>
<div class="t" style="left:1368px;top:552px;font-size:12px;color:#ff5722;transform:translateX(-50%)">50000</div>
<div class="t" style="left:1423px;top:552px;font-size:12px;color:#555;transform:translateX(-50%)">999</div>
<div class="t" style="left:1488px;top:552px;font-size:12px;color:#555;transform:translateX(-50%)">0 / 0</div>
<svg class="a" style="left:1546px;top:550px" width="15" height="14" viewBox="0 0 15 14"><path d="M0.2 6.6 L1.7 5.2 L5.0 8.2 L13.3 0.5 L14.2 1.6 L5.6 12.9 Z" fill="#5cb85c" stroke="#5cb85c" stroke-width="0.5" stroke-linejoin="round"/></svg>
<div class="a" style="left:1583px;top:545px;width:42px;height:24px;border:1px solid #bababa;border-radius:2px;background:#fff"></div>
<div class="t k" style="left:1592px;top:552px;font-size:12px;color:#999">卡密</div>
<div class="a" style="left:1636px;top:537px;width:66px;height:40px;background:#009688;border-radius:2px"></div>
<div class="t k" style="left:1655px;top:550px;font-size:14px;color:#fff">修改</div>
<div class="a" style="left:1706px;top:537px;width:33px;height:40px;background:#ff5722;border-radius:2px 0 0 2px"></div>
<div class="t k" style="left:1724px;top:550px;width:15px;overflow:hidden;font-size:14px;color:#fff">删</div>
<div class="a cb" style="left:286px;top:611px"></div>
<div class="t" style="left:333px;top:612px;font-size:12px;color:#555;transform:translateX(-50%)">4</div>
<div class="a inp" style="left:379px;top:602px;width:58px;height:30px"></div>
<div class="t" style="left:408px;top:612px;font-size:12px;color:#333;transform:translateX(-50%)">10000</div>
<svg class="a" style="left:488px;top:597px" width="40" height="40" viewBox="0 0 40 40"><rect width="40" height="40" rx="2" fill="#0b8e34"/><text x="2" y="10.3" font-size="7.6" font-family="Liberation Sans" fill="#dfe63a" textLength="20.5" lengthAdjust="spacingAndGlyphs">10,000</text><text x="23.5" y="9.6" font-size="3.6" font-family="Liberation Sans" fill="#dfe63a" textLength="5.5" lengthAdjust="spacingAndGlyphs">HKD</text><rect x="2" y="12" width="24" height="2.2" fill="#c6d93c" opacity=".9"/><text x="2" y="30.8" font-size="10" font-weight="bold" font-family="Liberation Sans" fill="#e9ee2c" textLength="14.5" lengthAdjust="spacingAndGlyphs" transform="skewX(-12) translate(5.5 0)">2025</text><path d="M34.8 2.5 L35.6 5.8 L38.6 5.4 L36.6 7.8 L38 11.4 L34.8 9.6 L32 11.8 L32.8 8.2 L30.8 6.2 L33.8 6 Z" fill="#e6ec2c"/><ellipse cx="32.5" cy="34.3" rx="6.5" ry="3.5" fill="#c9ecd3"/><ellipse cx="32.5" cy="33.8" rx="3.8" ry="1.7" fill="#eaf8ee"/><rect x="30.2" y="15" width="5.6" height="18.5" rx="2.2" fill="#86d7a2"/><rect x="31.2" y="16" width="1.8" height="16" fill="#c8f0d4"/><path d="M20.8 27.5 Q20.5 22.5 24.5 20.6 L31 19.2 Q35.8 20 36.3 25 L35.5 29.5 Q30.5 32 25 32 Q21 31.2 20.8 27.5 Z" fill="#eef4ef"/><path d="M23.2 23.2 L30.5 21.2 L33.2 24.2 L24.2 26.4 Z" fill="#2b4436"/><path d="M27.5 30.2 Q29.6 27.4 31.8 30.4 L31.2 33.2 L28 33.2 Z" fill="#13241a"/><path d="M21.8 28 L25.5 27.3" stroke="#9aa8a0" stroke-width=".8"/></svg>
<div class="t k" style="left:564px;top:612px;font-size:12px;color:#555">[虚拟] <span style="color:#2d5fd6">全球新能源充電卡</span></div>
<div class="t k" style="left:1203px;top:612px;font-size:12px;color:#555;transform:translateX(-50%)">新能源充電卡</div>
<div class="t" style="left:1368px;top:612px;font-size:12px;color:#ff5722;transform:translateX(-50%)">10000</div>
<div class="t" style="left:1423px;top:612px;font-size:12px;color:#555;transform:translateX(-50%)">999</div>
<div class="t" style="left:1488px;top:612px;font-size:12px;color:#555;transform:translateX(-50%)">0 / 0</div>
<svg class="a" style="left:1546px;top:610px" width="15" height="14" viewBox="0 0 15 14"><path d="M0.2 6.6 L1.7 5.2 L5.0 8.2 L13.3 0.5 L14.2 1.6 L5.6 12.9 Z" fill="#5cb85c" stroke="#5cb85c" stroke-width="0.5" stroke-linejoin="round"/></svg>
<div class="a" style="left:1583px;top:605px;width:42px;height:24px;border:1px solid #bababa;border-radius:2px;background:#fff"></div>
<div class="t k" style="left:1592px;top:612px;font-size:12px;color:#999">卡密</div>
<div class="a" style="left:1636px;top:597px;width:66px;height:40px;background:#009688;border-radius:2px"></div>
<div class="t k" style="left:1655px;top:610px;font-size:14px;color:#fff">修改</div>
<div class="a" style="left:1706px;top:597px;width:33px;height:40px;background:#ff5722;border-radius:2px 0 0 2px"></div>
<div class="t k" style="left:1724px;top:610px;width:15px;overflow:hidden;font-size:14px;color:#fff">删</div>
<div class="a cb" style="left:286px;top:671px"></div>
<div class="t" style="left:333px;top:672px;font-size:12px;color:#555;transform:translateX(-50%)">3</div>
<div class="a inp" style="left:379px;top:662px;width:58px;height:30px"></div>
<div class="t" style="left:408px;top:672px;font-size:12px;color:#333;transform:translateX(-50%)">10000</div>
<svg class="a" style="left:488px;top:657px" width="40" height="40" viewBox="0 0 40 40"><rect width="40" height="40" rx="2" fill="#0b8e34"/><text x="2" y="10.3" font-size="7.6" font-family="Liberation Sans" fill="#dfe63a" textLength="20.5" lengthAdjust="spacingAndGlyphs">5,000</text><text x="23.5" y="9.6" font-size="3.6" font-family="Liberation Sans" fill="#dfe63a" textLength="5.5" lengthAdjust="spacingAndGlyphs">HKD</text><rect x="2" y="12" width="24" height="2.2" fill="#c6d93c" opacity=".9"/><text x="2" y="30.8" font-size="10" font-weight="bold" font-family="Liberation Sans" fill="#e9ee2c" textLength="14.5" lengthAdjust="spacingAndGlyphs" transform="skewX(-12) translate(5.5 0)">2025</text><path d="M34.8 2.5 L35.6 5.8 L38.6 5.4 L36.6 7.8 L38 11.4 L34.8 9.6 L32 11.8 L32.8 8.2 L30.8 6.2 L33.8 6 Z" fill="#e6ec2c"/><ellipse cx="32.5" cy="34.3" rx="6.5" ry="3.5" fill="#c9ecd3"/><ellipse cx="32.5" cy="33.8" rx="3.8" ry="1.7" fill="#eaf8ee"/><rect x="30.2" y="15" width="5.6" height="18.5" rx="2.2" fill="#86d7a2"/><rect x="31.2" y="16" width="1.8" height="16" fill="#c8f0d4"/><path d="M20.8 27.5 Q20.5 22.5 24.5 20.6 L31 19.2 Q35.8 20 36.3 25 L35.5 29.5 Q30.5 32 25 32 Q21 31.2 20.8 27.5 Z" fill="#eef4ef"/><path d="M23.2 23.2 L30.5 21.2 L33.2 24.2 L24.2 26.4 Z" fill="#2b4436"/><path d="M27.5 30.2 Q29.6 27.4 31.8 30.4 L31.2 33.2 L28 33.2 Z" fill="#13241a"/><path d="M21.8 28 L25.5 27.3" stroke="#9aa8a0" stroke-width=".8"/></svg>
<div class="t k" style="left:564px;top:672px;font-size:12px;color:#555">[虚拟] <span style="color:#2d5fd6">全球新能源充電卡</span></div>
<div class="t k" style="left:1203px;top:672px;font-size:12px;color:#555;transform:translateX(-50%)">新能源充電卡</div>
<div class="t" style="left:1368px;top:672px;font-size:12px;color:#ff5722;transform:translateX(-50%)">5000</div>
<div class="t" style="left:1423px;top:672px;font-size:12px;color:#555;transform:translateX(-50%)">998</div>
<div class="t" style="left:1488px;top:672px;font-size:12px;color:#555;transform:translateX(-50%)">1 / 0</div>
<svg class="a" style="left:1546px;top:670px" width="15" height="14" viewBox="0 0 15 14"><path d="M0.2 6.6 L1.7 5.2 L5.0 8.2 L13.3 0.5 L14.2 1.6 L5.6 12.9 Z" fill="#5cb85c" stroke="#5cb85c" stroke-width="0.5" stroke-linejoin="round"/></svg>
<div class="a" style="left:1583px;top:665px;width:42px;height:24px;border:1px solid #bababa;border-radius:2px;background:#fff"></div>
<div class="t k" style="left:1592px;top:672px;font-size:12px;color:#999">卡密</div>
<div class="a" style="left:1636px;top:657px;width:66px;height:40px;background:#009688;border-radius:2px"></div>
<div class="t k" style="left:1655px;top:670px;font-size:14px;color:#fff">修改</div>
<div class="a" style="left:1706px;top:657px;width:33px;height:40px;background:#ff5722;border-radius:2px 0 0 2px"></div>
<div class="t k" style="left:1724px;top:670px;width:15px;overflow:hidden;font-size:14px;color:#fff">删</div>
<div class="a cb" style="left:286px;top:731px"></div>
<div class="t" style="left:333px;top:732px;font-size:12px;color:#555;transform:translateX(-50%)">2</div>
<div class="a inp" style="left:379px;top:722px;width:58px;height:30px"></div>
<div class="t" style="left:408px;top:732px;font-size:12px;color:#333;transform:translateX(-50%)">10000</div>
<svg class="a" style="left:488px;top:717px" width="40" height="40" viewBox="0 0 40 40"><rect width="40" height="40" rx="2" fill="#0b8e34"/><text x="2" y="10.3" font-size="7.6" font-family="Liberation Sans" fill="#dfe63a" textLength="20.5" lengthAdjust="spacingAndGlyphs">3,000</text><text x="23.5" y="9.6" font-size="3.6" font-family="Liberation Sans" fill="#dfe63a" textLength="5.5" lengthAdjust="spacingAndGlyphs">HKD</text><rect x="2" y="12" width="24" height="2.2" fill="#c6d93c" opacity=".9"/><text x="2" y="30.8" font-size="10" font-weight="bold" font-family="Liberation Sans" fill="#e9ee2c" textLength="14.5" lengthAdjust="spacingAndGlyphs" transform="skewX(-12) translate(5.5 0)">2025</text><path d="M34.8 2.5 L35.6 5.8 L38.6 5.4 L36.6 7.8 L38 11.4 L34.8 9.6 L32 11.8 L32.8 8.2 L30.8 6.2 L33.8 6 Z" fill="#e6ec2c"/><ellipse cx="32.5" cy="34.3" rx="6.5" ry="3.5" fill="#c9ecd3"/><ellipse cx="32.5" cy="33.8" rx="3.8" ry="1.7" fill="#eaf8ee"/><rect x="30.2" y="15" width="5.6" height="18.5" rx="2.2" fill="#86d7a2"/><rect x="31.2" y="16" width="1.8" height="16" fill="#c8f0d4"/><path d="M20.8 27.5 Q20.5 22.5 24.5 20.6 L31 19.2 Q35.8 20 36.3 25 L35.5 29.5 Q30.5 32 25 32 Q21 31.2 20.8 27.5 Z" fill="#eef4ef"/><path d="M23.2 23.2 L30.5 21.2 L33.2 24.2 L24.2 26.4 Z" fill="#2b4436"/><path d="M27.5 30.2 Q29.6 27.4 31.8 30.4 L31.2 33.2 L28 33.2 Z" fill="#13241a"/><path d="M21.8 28 L25.5 27.3" stroke="#9aa8a0" stroke-width=".8"/></svg>
<div class="t k" style="left:564px;top:732px;font-size:12px;color:#555">[虚拟] <span style="color:#2d5fd6">全球新能源充電卡</span></div>
<div class="t k" style="left:1203px;top:732px;font-size:12px;color:#555;transform:translateX(-50%)">新能源充電卡</div>
<div class="t" style="left:1368px;top:732px;font-size:12px;color:#ff5722;transform:translateX(-50%)">3000</div>
<div class="t" style="left:1423px;top:732px;font-size:12px;color:#555;transform:translateX(-50%)">999</div>
<div class="t" style="left:1488px;top:732px;font-size:12px;color:#555;transform:translateX(-50%)">0 / 0</div>
<svg class="a" style="left:1546px;top:730px" width="15" height="14" viewBox="0 0 15 14"><path d="M0.2 6.6 L1.7 5.2 L5.0 8.2 L13.3 0.5 L14.2 1.6 L5.6 12.9 Z" fill="#5cb85c" stroke="#5cb85c" stroke-width="0.5" stroke-linejoin="round"/></svg>
<div class="a" style="left:1583px;top:725px;width:42px;height:24px;border:1px solid #bababa;border-radius:2px;background:#fff"></div>
<div class="t k" style="left:1592px;top:732px;font-size:12px;color:#999">卡密</div>
<div class="a" style="left:1636px;top:717px;width:66px;height:40px;background:#009688;border-radius:2px"></div>
<div class="t k" style="left:1655px;top:730px;font-size:14px;color:#fff">修改</div>
<div class="a" style="left:1706px;top:717px;width:33px;height:40px;background:#ff5722;border-radius:2px 0 0 2px"></div>
<div class="t k" style="left:1724px;top:730px;width:15px;overflow:hidden;font-size:14px;color:#fff">删</div>
<div class="a cb" style="left:286px;top:791px"></div>
<div class="t" style="left:333px;top:792px;font-size:12px;color:#555;transform:translateX(-50%)">1</div>
<div class="a inp" style="left:379px;top:782px;width:58px;height:30px"></div>
<div class="t" style="left:408px;top:792px;font-size:12px;color:#333;transform:translateX(-50%)">10000</div>
<svg class="a" style="left:488px;top:777px" width="40" height="40" viewBox="0 0 40 40"><rect width="40" height="40" rx="2" fill="#0b8e34"/><text x="2" y="10.3" font-size="7.6" font-family="Liberation Sans" fill="#dfe63a" textLength="20.5" lengthAdjust="spacingAndGlyphs">1,000</text><text x="23.5" y="9.6" font-size="3.6" font-family="Liberation Sans" fill="#dfe63a" textLength="5.5" lengthAdjust="spacingAndGlyphs">HKD</text><rect x="2" y="12" width="24" height="2.2" fill="#c6d93c" opacity=".9"/><text x="2" y="30.8" font-size="10" font-weight="bold" font-family="Liberation Sans" fill="#e9ee2c" textLength="14.5" lengthAdjust="spacingAndGlyphs" transform="skewX(-12) translate(5.5 0)">2025</text><path d="M34.8 2.5 L35.6 5.8 L38.6 5.4 L36.6 7.8 L38 11.4 L34.8 9.6 L32 11.8 L32.8 8.2 L30.8 6.2 L33.8 6 Z" fill="#e6ec2c"/><ellipse cx="32.5" cy="34.3" rx="6.5" ry="3.5" fill="#c9ecd3"/><ellipse cx="32.5" cy="33.8" rx="3.8" ry="1.7" fill="#eaf8ee"/><rect x="30.2" y="15" width="5.6" height="18.5" rx="2.2" fill="#86d7a2"/><rect x="31.2" y="16" width="1.8" height="16" fill="#c8f0d4"/><path d="M20.8 27.5 Q20.5 22.5 24.5 20.6 L31 19.2 Q35.8 20 36.3 25 L35.5 29.5 Q30.5 32 25 32 Q21 31.2 20.8 27.5 Z" fill="#eef4ef"/><path d="M23.2 23.2 L30.5 21.2 L33.2 24.2 L24.2 26.4 Z" fill="#2b4436"/><path d="M27.5 30.2 Q29.6 27.4 31.8 30.4 L31.2 33.2 L28 33.2 Z" fill="#13241a"/><path d="M21.8 28 L25.5 27.3" stroke="#9aa8a0" stroke-width=".8"/></svg>
<div class="t k" style="left:564px;top:792px;font-size:12px;color:#555">[虚拟] <span style="color:#2d5fd6">全球新能源充電卡</span></div>
<div class="t k" style="left:1203px;top:792px;font-size:12px;color:#555;transform:translateX(-50%)">新能源充電卡</div>
<div class="t" style="left:1368px;top:792px;font-size:12px;color:#ff5722;transform:translateX(-50%)">1000</div>
<div class="t" style="left:1423px;top:792px;font-size:12px;color:#555;transform:translateX(-50%)">965</div>
<div class="t" style="left:1488px;top:792px;font-size:12px;color:#555;transform:translateX(-50%)">34 / 0</div>
<svg class="a" style="left:1546px;top:790px" width="15" height="14" viewBox="0 0 15 14"><path d="M0.2 6.6 L1.7 5.2 L5.0 8.2 L13.3 0.5 L14.2 1.6 L5.6 12.9 Z" fill="#5cb85c" stroke="#5cb85c" stroke-width="0.5" stroke-linejoin="round"/></svg>
<div class="a" style="left:1583px;top:785px;width:42px;height:24px;border:1px solid #bababa;border-radius:2px;background:#fff"></div>
<div class="t k" style="left:1592px;top:792px;font-size:12px;color:#999">卡密</div>
<div class="a" style="left:1636px;top:777px;width:66px;height:40px;background:#009688;border-radius:2px"></div>
<div class="t k" style="left:1655px;top:790px;font-size:14px;color:#fff">修改</div>
<div class="a" style="left:1706px;top:777px;width:33px;height:40px;background:#ff5722;border-radius:2px 0 0 2px"></div>
<div class="t k" style="left:1724px;top:790px;width:15px;overflow:hidden;font-size:14px;color:#fff">删</div>
<div class="a" style="left:267px;top:828px;width:1472px;height:15px;background:#f8f8f8"></div>
<div class="a" style="left:272px;top:831px;width:0;height:0;border-top:4.5px solid transparent;border-bottom:4.5px solid transparent;border-right:5px solid #8a8a8a"></div>
<div class="a" style="left:285px;top:831px;width:1311px;height:9px;background:#8a8a8a;border-radius:4.5px"></div>
<div class="a" style="left:1728px;top:831px;width:0;height:0;border-top:4.5px solid transparent;border-bottom:4.5px solid transparent;border-left:5px solid #8a8a8a"></div>
<div class="a" style="left:267px;top:854px;width:1472px;height:80px;background:#fafafa;border-top:1px solid #efefef"></div>
<div class="a cb" style="left:287px;top:877px"></div>
<div class="a bb" style="left:309px;top:865px;width:94px"></div>
<div class="t k" style="left:356.0px;top:878px;font-size:14px;color:#555;transform:translateX(-50%)">批量删除</div>
<div class="a bb" style="left:411px;top:865px;width:94px"></div>
<div class="t k" style="left:458.0px;top:878px;font-size:14px;color:#555;transform:translateX(-50%)">更新排序</div>
<div class="a bb" style="left:514px;top:865px;width:94px"></div>
<div class="t k" style="left:561.0px;top:878px;font-size:14px;color:#555;transform:translateX(-50%)">批量上架</div>
<div class="a bb" style="left:616px;top:865px;width:94px"></div>
<div class="t k" style="left:663.0px;top:878px;font-size:14px;color:#555;transform:translateX(-50%)">批量下架</div>
<div class="a bb" style="left:719px;top:865px;width:94px"></div>
<div class="t k" style="left:766.0px;top:878px;font-size:14px;color:#555;transform:translateX(-50%)">批量推荐</div>
<div class="a bb" style="left:821px;top:865px;width:94px"></div>
<div class="t k" style="left:868.0px;top:878px;font-size:14px;color:#555;transform:translateX(-50%)">取消推荐</div>
<div class="a bb" style="left:924px;top:865px;width:122px"></div>
<div class="t k" style="left:985.0px;top:878px;font-size:14px;color:#555;transform:translateX(-50%)">批量转移商品</div>
</body></html>
